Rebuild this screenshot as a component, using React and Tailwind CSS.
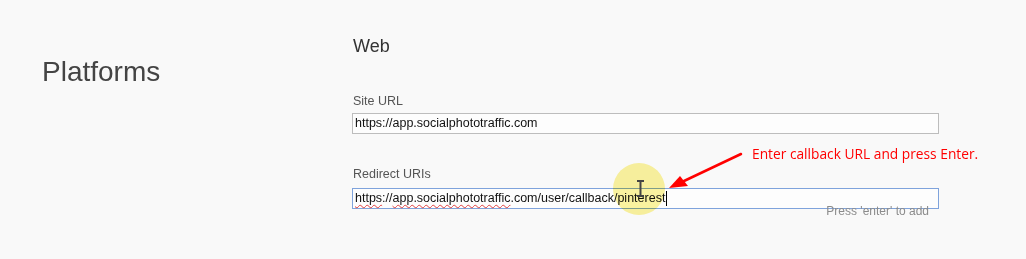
const sans = { fontFamily: '"Liberation Sans", Arial, sans-serif' }

export default function App() {
    return (
        <div className="relative w-[1026px] h-[259px] overflow-hidden bg-[#f9f9f9]" style={sans}>
            <div className="flex">
                {/* Left title */}
                <div className="w-[352px] shrink-0 pl-[42px] pt-[56px]">
                    <h1 className="text-[28px] leading-[32px] text-[#444]">Platforms</h1>
                </div>

                {/* Web form */}
                <div className="w-[587px] pt-[36px]">
                    <h2 className="text-[18px] leading-[20px] text-[#333] pl-px">Web</h2>

                    <p className="mt-[37px] text-[12.5px] leading-[16px] text-[#555] pl-px">Site URL</p>
                    <div className="mt-[4px] h-[21px] border border-[#bdbdbd] bg-[#fdfdfd] flex items-center px-[2px] text-[12.5px] text-[#111]">
                        https://app.socialphototraffic.com
                    </div>

                    <p className="mt-[32px] text-[12.5px] leading-[16px] text-[#555] pl-px">Redirect URIs</p>
                    <div className="relative mt-[6px] h-[21px] border border-[#7fa3dc] bg-[#fdfdfd] flex items-center px-[2px] text-[12.5px] text-[#111]">
                        <span className="underline decoration-wavy decoration-[#e04040] decoration-1 underline-offset-[2px]">https</span>
                        <span>://</span>
                        <span className="underline decoration-wavy decoration-[#e04040] decoration-1 underline-offset-[2px]">app.socialphototraffic</span>
                        <span>.com/user/callback/pinterest</span>
                        <span className="w-px h-[15px] bg-black ml-px" />
                        <span className="absolute right-[9px] top-[15px] text-[12px] leading-[14px] text-[#8c8c8c]">Press 'enter' to add</span>
                    </div>
                </div>
            </div>

            {/* Annotation overlay */}
            <div className="absolute left-[613px] top-[163px] w-[52px] h-[52px] rounded-full bg-[#fcf4a0] mix-blend-multiply" />
            <svg className="absolute left-[636px] top-[180px]" width="9" height="17" viewBox="0 0 9 17">
                <path d="M1 1h7M4.5 1v15M1 16h7" stroke="#444" strokeWidth="2" fill="none" />
            </svg>
            <svg className="absolute left-0 top-0 pointer-events-none" width="1026" height="259">
                <line x1="741" y1="154" x2="684" y2="181" stroke="#f00" strokeWidth="2.5" strokeLinecap="round" />
                <path d="M669 188 L680 176 L688 186 Z" fill="#f00" />
            </svg>
            <p className="absolute left-[752px] top-[144px] text-[13.75px] leading-[20px] text-[#ff0000]" style={{ fontFamily: '"Open Sans", sans-serif' }}>
                Enter callback URL and press Enter.
            </p>
        </div>
    )
}
